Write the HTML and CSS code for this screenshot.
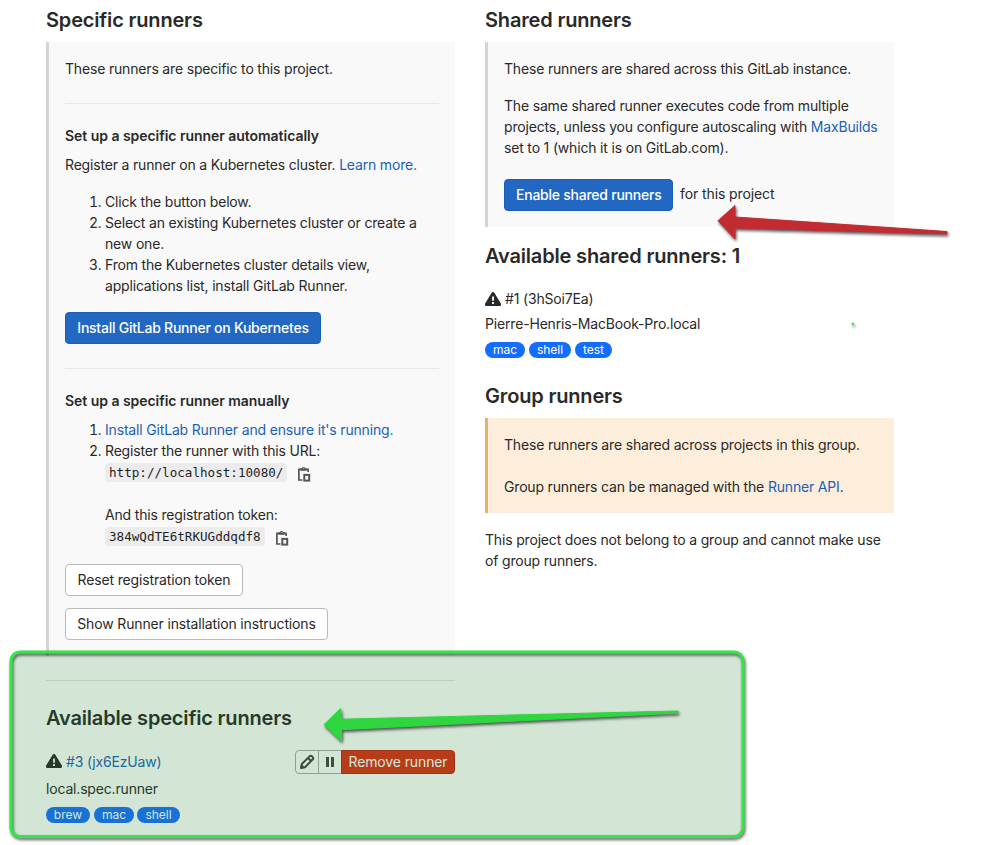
FILE: index.html
```html
<!DOCTYPE html>
<html lang="en">
<head>
<meta charset="utf-8">
<title>Runners</title>
<link rel="stylesheet" href="styles.css">
</head>
<body>
<svg class="defs" width="0" height="0" aria-hidden="true">
  <symbol id="warning" viewBox="0 0 16 16"><path fill-rule="evenodd" d="M9.500 1.900a1.700 1.700 0 0 0-3 0L.3 12.200A1.600 1.600 0 0 0 1.600 15h12.800a1.600 1.600 0 0 0 1.300-2.800zM7.100 5.500h1.800v4.200H7.100zm0 5.500h1.800v2H7.100z"/></symbol>
  <symbol id="copy" viewBox="0 0 16 16"><path fill="none" stroke="currentColor" stroke-width="1.700" d="M6.500 14H2.900V3.300h9.200V6"/><path fill="currentColor" fill-rule="evenodd" d="M4.500 4.800V2.200h1.300a1.800 1.800 0 0 1 3.400 0h1.300v2.600zM6.800 2h1.400v1.200H6.800z"/><rect x="8.300" y="8.900" width="4.900" height="5.700" fill="none" stroke="currentColor" stroke-width="2"/></symbol>
  <symbol id="pencil" viewBox="0 0 16 16"><path fill="none" stroke="currentColor" stroke-width="2" stroke-linejoin="round" d="M2 14l.8-4 7.700-7.600q1.300-1.200 2.500 0l.6.600q1.200 1.200 0 2.500L6 13.200zM9 4l3 3"/><path d="M1.300 14.800l1-5 4.100 4z"/></symbol>
</svg>
<main class="columns">
  <section class="column">
    <h4>Specific runners</h4>
    <div class="callout setup">
      <p>These runners are specific to this project.</p>
      <hr>
      <h5>Set up a specific runner automatically</h5>
      <p class="register">Register a runner on a Kubernetes cluster. <a>Learn more.</a></p>
      <ol class="steps">
        <li>Click the button below.</li>
        <li>Select an existing Kubernetes cluster or create a<br>new one.</li>
        <li>From the Kubernetes cluster details view,<br>applications list, install GitLab Runner.</li>
      </ol>
      <button class="btn primary install">Install GitLab Runner on Kubernetes</button>
      <hr>
      <h5>Set up a specific runner manually</h5>
      <ol class="manual">
        <li><a>Install GitLab Runner and ensure it's running.</a></li>
        <li>Register the runner with this URL:
          <div class="code-line"><code>http://localhost:10080/</code><svg class="copy"><use href="#copy"/></svg></div>
          <div class="token-label">And this registration token:</div>
          <div class="code-line"><code>384wQdTE6tRKUGddqdf8</code><svg class="copy"><use href="#copy"/></svg></div>
        </li>
      </ol>
      <div class="actions">
        <button class="btn reset">Reset registration token</button>
        <button class="btn show">Show Runner installation instructions</button>
      </div>
    </div>
    <hr class="section-rule">
    <h4>Available specific runners</h4>
    <div class="runner own">
      <div class="runner-head">
        <svg class="warning"><use href="#warning"/></svg><a>#3 (jx6EzUaw)</a>
        <div class="btn-group"><button class="seg"><svg><use href="#pencil"/></svg></button><button class="seg"><i class="pause"></i></button><button class="seg danger">Remove runner</button></div>
      </div>
      <p class="name">local.spec.runner</p>
      <div class="tags"><span class="t44">brew</span><span class="t40">mac</span><span class="t43">shell</span></div>
    </div>
  </section>
  <section class="column">
    <h4>Shared runners</h4>
    <div class="callout shared">
      <p>These runners are shared across this GitLab instance.</p>
      <p class="para">The same shared runner executes code from multiple<br>projects, unless you configure autoscaling with <a>MaxBuilds</a><br>set to 1 (which it is on GitLab.com).</p>
      <div class="enable"><button class="btn primary">Enable shared runners</button><span>for this project</span></div>
    </div>
    <h4 class="available">Available shared runners: 1</h4>
    <div class="runner">
      <div class="runner-head"><svg class="warning"><use href="#warning"/></svg>#1 (3hSoi7Ea)</div>
      <p class="name">Pierre-Henris-MacBook-Pro.local</p>
      <div class="tags"><span class="t40">mac</span><span class="t42">shell</span><span class="t37">test</span></div>
    </div>
    <h4 class="group-title">Group runners</h4>
    <div class="callout warn">
      <p>These runners are shared across projects in this group.</p>
      <p>Group runners can be managed with the <a>Runner API</a>.</p>
    </div>
    <p class="no-group">This project does not belong to a group and cannot make use<br>of group runners.</p>
  </section>
</main>
<svg class="annotations" viewBox="0 0 999 845" aria-hidden="true">
  <rect x="11" y="652" width="732" height="184.500" rx="9" fill="#238232" fill-opacity=".2"/>
  <g class="shadowed">
    <rect x="11" y="652" width="732" height="184.500" rx="9" fill="none" stroke="#2fe842" stroke-width="3"/>
    <path fill="#2fd640" stroke="#2fd640" stroke-linejoin="round" d="M324 724.700L340.500 708.500 341.500 719.200 678 711V713L341.500 729.700V741z"/>
    <path fill="#c32b33" stroke="#c32b33" stroke-linejoin="round" d="M718 220.700L735 205.500V217L947 231.500V234L735 228V239z"/>
    <circle cx="852.800" cy="323.800" r="1.300" fill="#2fe842"/>
  </g>
</svg>
</body>
</html>
```
FILE: styles.css
```css
* { box-sizing: border-box; }
body { margin: 0; width: 999px; height: 845px; overflow: hidden; background: #fff; color: #292929; font: 14px/21px Inter, "Liberation Sans", sans-serif; letter-spacing: -.175px; white-space: nowrap; position: relative; }
.defs { position: absolute; }
p, h4, h5, ol { margin: 0; }
a { color: #1b5fb8; }
h4 { font-size: 20px; line-height: 24px; font-weight: 600; letter-spacing: -.17px; }
h5 { font-size: 14px; line-height: 21px; font-weight: 600; letter-spacing: -.04px; }
hr { height: 1px; border: 0; background: #e8e8e8; margin: 0; }
.columns { display: grid; grid-template-columns: 409px 409px; column-gap: 30px; padding: 8px 0 0 46px; align-items: start; }
.callout { margin-top: 10px; border-left: 3px solid #d4d4d4; background: #f9f9f9; padding: 16px; }
.setup { height: 614px; }
.setup hr { margin: 24px 0 21px; }
.register { margin-top: 8px; }
ol { padding-left: 40px; }
.steps { margin: 16px 0; }
.btn { display: block; height: 32px; padding: 0 11px; border: 1px solid #bababa; border-radius: 4px; background: #fff; color: #292929; font: inherit; letter-spacing: -.15px; line-height: 30px; white-space: nowrap; }
.primary { background: #2268c2; border-color: #1b5fb5; color: #fff; font-weight: 500; letter-spacing: -.24px; }
.install { width: 256px; }
.manual { margin-top: 8px; }
.code-line { display: flex; align-items: center; height: 23px; }
code { height: 19px; padding: 0 4px; border-radius: 4px; background: #ececec; font: 12.6px/20px "DejaVu Sans Mono", monospace; color: #1f1f1f; letter-spacing: 0; }
.copy { width: 16px; height: 16px; margin-left: 9px; color: #555; position: relative; top: 1px; }
.token-label { margin-top: 20px; }
.actions { display: grid; row-gap: 12px; margin-top: 16px; }
.reset { width: 178px; }
.show { width: 263px; }
.section-rule { margin: 24px 0 25px; background: #e3e3e3; }
.runner { margin-top: 20px; }
.runner-head { display: flex; align-items: center; height: 21px; }
.warning { width: 16px; height: 16px; margin-right: 4px; fill: #292929; }
.name { margin-top: 4px; }
.tags { display: flex; gap: 4px; margin-top: 8px; }
.tags span { height: 16px; line-height: 16px; border-radius: 8px; background: #146dff; color: #fff; font-size: 12px; text-align: center; letter-spacing: 0; }
.t44 { width: 44px; }
.t43 { width: 43px; }
.t42 { width: 42px; }
.t40 { width: 40px; }
.t37 { width: 37px; }
.own .tags span + span + span { margin-left: -1px; }
.own .runner-head { height: 24px; }
.own .runner-head > a, .own .warning { margin-bottom: 2px; }
.own .name { margin-top: 4px; }
.btn-group { display: flex; margin-left: auto; }
.seg { display: flex; align-items: center; justify-content: center; width: 24px; height: 24px; padding: 0; border: 1px solid #aaa; background: transparent; font: inherit; letter-spacing: -.12px; color: #444; }
.seg:first-child { border-radius: 4px 0 0 4px; }
.seg + .seg { margin-left: -1px; }
.seg svg { width: 16px; height: 16px; fill: currentColor; }
.seg.danger { width: 114px; padding-bottom: 2px; border-color: #c01f0c; border-radius: 0 4px 4px 0; background: #dd2b12; color: #fff; }
.pause { width: 8px; height: 10px; border: solid #444; border-width: 0 3px; }
.shared { height: 185px; }
.para { margin-top: 16px; }
.enable { display: flex; margin-top: 21px; }
.enable .btn { width: 169px; margin-right: 7px; }
.enable span { line-height: 30px; letter-spacing: -.1px; }
.available { margin-top: 17px; }
.group-title { margin-top: 26px; }
.warn { height: 95px; margin-top: 10px; background: #fdeedb; border-color: #e2b36a; }
.warn p + p { margin-top: 21px; }
.no-group { margin-top: 16px; }
.annotations { position: absolute; left: 0; top: 0; width: 999px; height: 845px; pointer-events: none; }
.shadowed { filter: drop-shadow(1.500px 2.500px 1.500px rgba(0, 0, 0, .65)); }
```
